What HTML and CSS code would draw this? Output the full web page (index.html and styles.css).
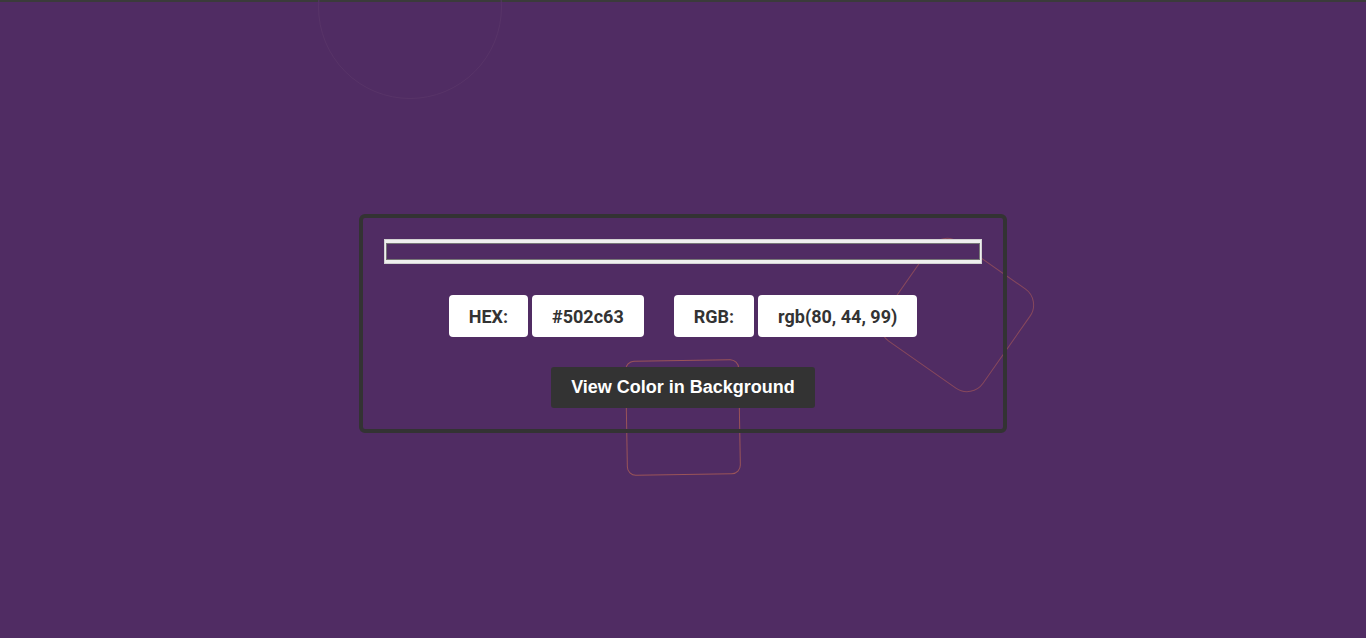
FILE: index.html
```html
<!DOCTYPE html>
<html lang="en">
<head>
<meta charset="utf-8">
<title>Color Picker</title>
<link rel="stylesheet" href="styles.css">
</head>
<body>
<div class="topbar"></div>
<div class="stage">
  <div class="deco deco-circle"></div>
  <div class="deco deco-square"></div>
  <div class="deco deco-diamond"></div>
  <main class="card">
    <div class="picker"><div class="swatch"></div></div>
    <div class="values">
      <div class="group">
        <span class="chip">HEX:</span>
        <span class="chip">#502c63</span>
      </div>
      <div class="group">
        <span class="chip">RGB:</span>
        <span class="chip">rgb(80, 44, 99)</span>
      </div>
    </div>
    <button class="apply">View Color in Background</button>
  </main>
</div>
</body>
</html>
```

FILE: styles.css
```css
html, body {
  margin: 0;
  padding: 0;
}
body {
  background: #502c63;
  height: 638px;
  overflow: hidden;
  font-family: Roboto, "Liberation Sans", sans-serif;
}
.topbar {
  height: 2px;
  background: #3b3b3b;
}
.stage {
  position: relative;
  height: 636px;
  display: flex;
  justify-content: center;
  align-items: flex-start;
  padding-top: 212px;
  box-sizing: border-box;
}
.deco {
  position: absolute;
  box-sizing: border-box;
  z-index: 0;
}
.deco-circle {
  left: 318px;
  top: -87px;
  width: 184px;
  height: 184px;
  border-radius: 50%;
  border: 1px solid #583468;
}
.deco-square {
  left: 626px;
  top: 358px;
  width: 114px;
  height: 115px;
  border-radius: 9px;
  border: 1px solid #9a5458;
  transform: rotate(-1deg);
}
.deco-diamond {
  left: 896px;
  top: 252px;
  width: 122px;
  height: 122px;
  border-radius: 20px;
  border: 1px solid #87485c;
  transform: rotate(35deg);
}
.card {
  position: relative;
  z-index: 1;
  width: 648px;
  box-sizing: border-box;
  border: 4px solid #333333;
  border-radius: 6px;
  padding: 21px 21px 21px 21px;
  display: flex;
  flex-direction: column;
  align-items: center;
}
.picker {
  width: 100%;
  height: 25px;
  box-sizing: border-box;
  background: #efefef;
  border: 1px solid #d2d2d2;
  padding: 3px 1px;
  display: flex;
}
.swatch {
  flex: 1;
  background: #502c63;
  border: 1px solid #777777;
}
.values {
  display: flex;
  gap: 30px;
  margin-top: 31px;
}
.group {
  display: flex;
  gap: 4px;
}
.chip {
  display: flex;
  align-items: center;
  height: 42px;
  padding: 0 20px;
  background: #ffffff;
  border-radius: 4px;
  color: #333333;
  font-weight: 700;
  font-size: 18px;
}
.apply {
  margin-top: 30px;
  height: 41px;
  padding: 0 20px;
  border: none;
  border-radius: 3px;
  background: #333333;
  color: #ffffff;
  font-family: "Liberation Sans", Arial, sans-serif;
  font-weight: 700;
  font-size: 18px;
}
```
